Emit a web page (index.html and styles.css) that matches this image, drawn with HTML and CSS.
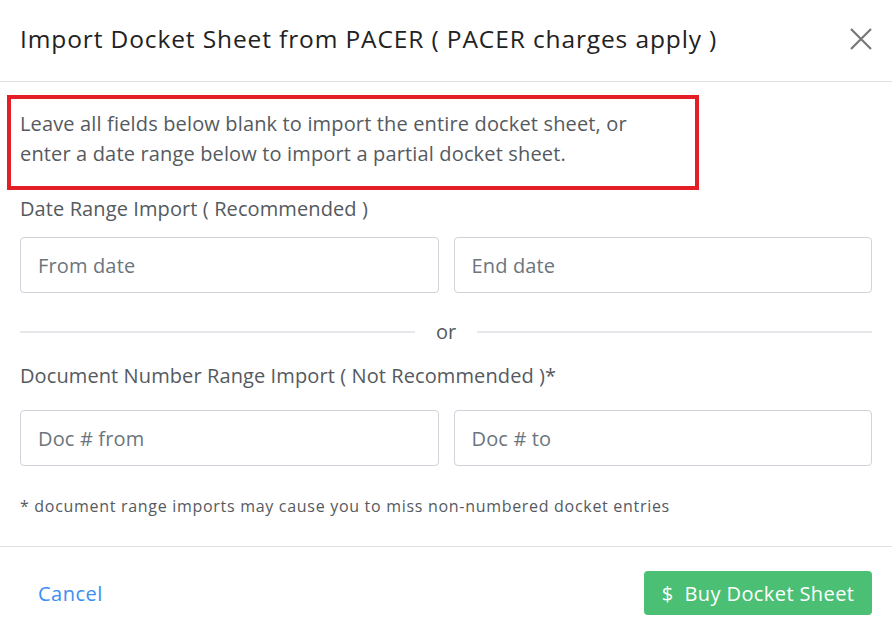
FILE: index.html
```html
<!DOCTYPE html>
<html lang="en">
<head>
<meta charset="utf-8">
<title>Import Docket Sheet</title>
<link rel="stylesheet" href="styles.css">
</head>
<body>
<div class="modal">
  <div class="modal-header">
    <h1 class="modal-title">Import Docket Sheet from PACER ( PACER charges apply )</h1>
    <button class="close" aria-label="Close">
      <svg width="22" height="22" viewBox="0 0 22 22"><path d="M1 1 L21 21 M21 1 L1 21" stroke="#777" stroke-width="2.2" fill="none"/></svg>
    </button>
  </div>
  <div class="modal-body">
    <div class="notice">
      <p>Leave all fields below blank to import the entire docket sheet, or<br>enter a date range below to import a partial docket sheet.</p>
    </div>
    <div class="label label-first">Date Range Import ( Recommended )</div>
    <div class="row">
      <input class="field" type="text" placeholder="From date">
      <input class="field" type="text" placeholder="End date">
    </div>
    <div class="divider"><span class="line"></span><span class="or">or</span><span class="line"></span></div>
    <div class="label label-second">Document Number Range Import ( Not Recommended )*</div>
    <div class="row">
      <input class="field" type="text" placeholder="Doc # from">
      <input class="field" type="text" placeholder="Doc # to">
    </div>
    <p class="footnote">* document range imports may cause you to miss non-numbered docket entries</p>
  </div>
  <div class="modal-footer">
    <a class="cancel" href="#">Cancel</a>
    <button class="buy"><span class="dollar">$</span>Buy Docket Sheet</button>
  </div>
</div>
</body>
</html>
```
FILE: styles.css
```css
* { box-sizing: border-box; }
body {
  margin: 0;
  background: #fff;
  font-family: "Open Sans", "Noto Sans", sans-serif;
  color: #555a60;
}
.modal { width: 892px; }
.modal-header {
  height: 82px;
  border-bottom: 1px solid #dee2e6;
  display: flex;
  align-items: center;
  justify-content: space-between;
  padding: 0 20px 5px;
}
.modal-title {
  margin: 0;
  font-size: 24.5px;
  font-weight: 400;
  color: #222;
  letter-spacing: 0.88px;
}
.close {
  border: 0;
  background: none;
  padding: 0;
  width: 22px;
  height: 22px;
  display: flex;
  margin-top: 2px;
}
.modal-body { padding: 13px 20px 0; }
.notice {
  margin: 0 -13px;
  width: 692px;
  border: 4px solid #e41e26;
  padding: 10px 9px 17px;
}
.notice p {
  margin: 0;
  font-size: 20px;
  line-height: 30px;
  letter-spacing: 0.15px;
  color: #555a60;
}
.label {
  font-size: 20px;
  line-height: 30px;
  letter-spacing: 0.1px;
  color: #555a60;
}
.label-first { margin-top: 4px; margin-bottom: 13px; }
.label-second { margin-bottom: 19px; }
.row {
  display: grid;
  grid-template-columns: 1fr 1fr;
  gap: 15px;
}
.field {
  height: 56px;
  border: 1px solid #ced4da;
  border-radius: 4px;
  padding: 0 17px;
  font-family: inherit;
  font-size: 20px;
  letter-spacing: 0.15px;
  color: #555a60;
  outline: none;
}
.field::placeholder { color: #6c757d; }
.divider {
  display: flex;
  align-items: center;
  height: 24px;
  margin: 27px 0 17px;
}
.line { flex: 1; height: 2px; background: #e5e7ea; }
.or {
  width: 62px;
  text-align: center;
  font-size: 20px;
  line-height: 24px;
  color: #555a60;
}
.footnote {
  margin: 28px 0 0;
  font-size: 16px;
  line-height: 24px;
  letter-spacing: 0.7px;
  color: #555a60;
  padding-bottom: 28px;
}
.modal-footer {
  border-top: 1px solid #dee2e6;
  display: flex;
  align-items: center;
  justify-content: space-between;
  padding: 24px 20px 0 38px;
}
.cancel {
  font-size: 20px;
  letter-spacing: 0.5px;
  color: #3d8ef5;
  text-decoration: none;
}
.buy {
  width: 228px;
  height: 44px;
  border: 0;
  border-radius: 4px;
  background: #4bbf73;
  color: #fff;
  font-family: inherit;
  font-size: 20px;
  letter-spacing: 0.4px;
  display: flex;
  align-items: center;
  justify-content: center;
  gap: 11px;
}
.dollar { font-size: 20px; }
```
